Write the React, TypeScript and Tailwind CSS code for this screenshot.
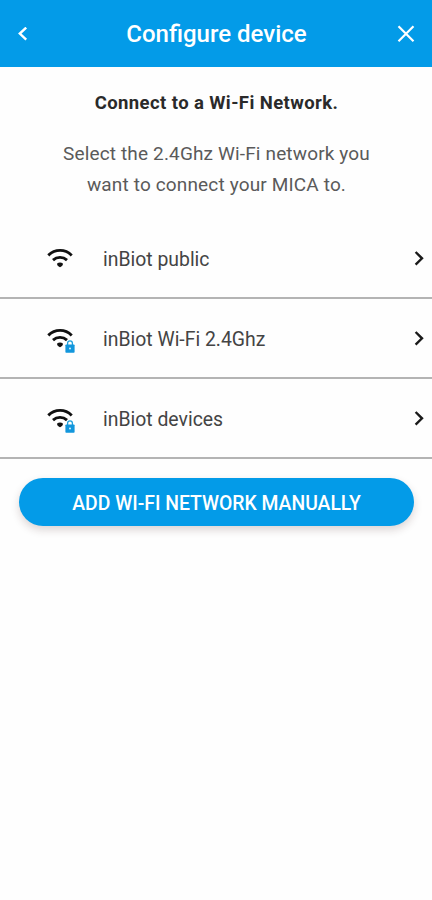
type Network = { name: string; secured: boolean };

const NETWORKS: Network[] = [
  { name: "inBiot public", secured: false },
  { name: "inBiot Wi-Fi 2.4Ghz", secured: true },
  { name: "inBiot devices", secured: true },
];

function ChevronLeft() {
  return (
    <svg width="10" height="14" viewBox="0 0 10 14" fill="none" stroke="currentColor" strokeWidth="2.4">
      <path d="M8.2.6 1.8 6.6l6.4 6" />
    </svg>
  );
}

function ChevronRight() {
  return (
    <svg width="10" height="16" viewBox="0 0 10 16" fill="none" stroke="currentColor" strokeWidth="2.4">
      <path d="M1.6 2 8 8.3l-6.4 6.3" />
    </svg>
  );
}

function Close() {
  return (
    <svg width="18" height="18" viewBox="0 0 18 18" fill="none" stroke="currentColor" strokeWidth="2.2">
      <path d="m1.5 1.2 15 15M16.5 1.2l-15 15" />
    </svg>
  );
}

function Wifi() {
  return (
    <svg width="26" height="20" viewBox="0 0 26 20" fill="none" stroke="currentColor" strokeWidth="2.9">
      <path d="M1.3 7.4C8 .7 18.2.7 24.7 7.4" />
      <path d="M6 12.1c4-3.6 10-3.6 14 0" />
      <path d="M10.1 15.6c1.7-1.6 4.1-1.6 5.8 0 .5 1.3-1.2 3.2-2.9 3.6-1.7-.4-3.4-2.3-2.9-3.6z" fill="currentColor" stroke="none" />
    </svg>
  );
}

function Lock() {
  return (
    <svg width="10" height="13" viewBox="0 0 10 13" className="absolute left-[18px] top-[12px]">
      <path d="M2.6 5.5V3.2a2.4 2.4 0 0 1 4.8 0v2.3" fill="none" stroke="#1a9fdc" strokeWidth="1.3" />
      <rect x="0.4" y="4.4" width="9.2" height="8.3" rx="0.8" fill="#1296dc" />
      <circle cx="5" cy="8.4" r="1" fill="#d8f0fc" />
    </svg>
  );
}

function NetworkRow({ name, secured }: Network) {
  return (
    <button className="flex h-20 w-full items-center border-b-2 border-[#b4b4b4] pr-2 pl-[47px] text-left">
      <span className="relative w-14 shrink-0 text-[#111]">
        <Wifi />
        {secured && <Lock />}
      </span>
      <span className="flex-1 pt-[3px] text-[19.4px] leading-6 text-[#444]">{name}</span>
      <span className="text-[#1a1a1a]">
        <ChevronRight />
      </span>
    </button>
  );
}

export default function App() {
  return (
    <div className="min-h-screen w-full bg-[#fefefe] font-['Roboto',sans-serif]">
      <header className="flex h-[67px] items-center justify-between bg-[#039be8] pr-[17px] pl-[18px] text-white">
        <button aria-label="Back" className="w-[18px]">
          <ChevronLeft />
        </button>
        <h1 className="text-2xl font-medium">Configure device</h1>
        <button aria-label="Close">
          <Close />
        </button>
      </header>

      <main>
        <div className="flex h-[152px] flex-col items-center pt-[22px] pl-px text-center">
          <h2 className="text-[18.5px] leading-7 font-bold tracking-[0.4px] whitespace-nowrap text-[#2a2a2a]">
            Connect to a Wi-Fi Network.
          </h2>
          <p className="mt-[21px] text-[19px] leading-[31px] tracking-[0.15px] whitespace-nowrap text-[#5a5a5a]">
            Select the 2.4Ghz Wi-Fi network you
            <br />
            want to connect your MICA to.
          </p>
        </div>

        {NETWORKS.map((network) => (
          <NetworkRow key={network.name} {...network} />
        ))}

        <div className="pt-[19px] pr-[18px] pl-[19px]">
          <button className="h-12 w-full rounded-full bg-[#039be8] pt-1 text-[19.35px] leading-6 font-medium whitespace-nowrap text-white shadow-[0_4px_8px_rgba(60,30,30,0.18)]">
            ADD WI-FI NETWORK MANUALLY
          </button>
        </div>
      </main>
    </div>
  );
}
